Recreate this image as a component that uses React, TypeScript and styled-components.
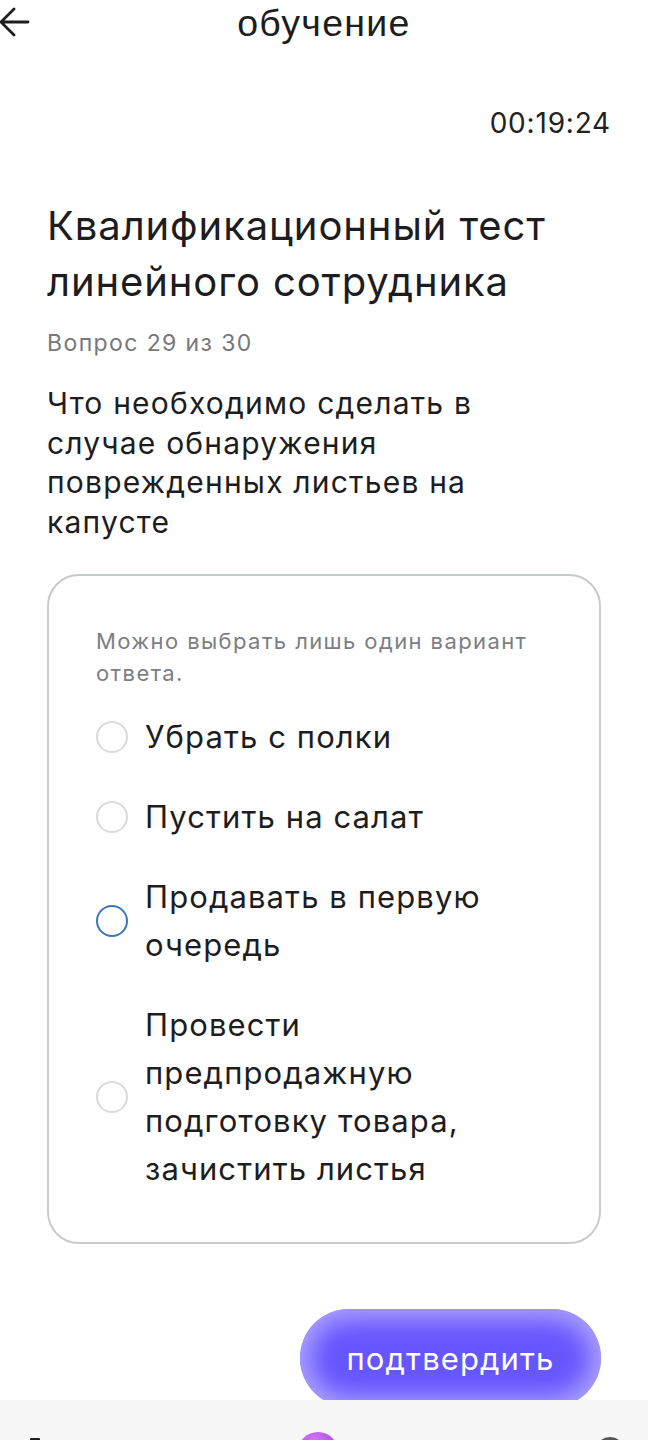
import styled, { createGlobalStyle } from 'styled-components'

const GlobalStyle = createGlobalStyle`
  html, body {
    margin: 0;
    padding: 0;
    background: #ffffff;
  }
  body {
    font-family: Inter, 'Noto Sans', sans-serif;
    color: #1d1d1f;
  }
  * {
    box-sizing: border-box;
  }
`

const Page = styled.div`
  width: 648px;
  height: 1440px;
  display: flex;
  flex-direction: column;
  overflow: hidden;
`

const Header = styled.header`
  position: relative;
  display: flex;
  align-items: center;
  justify-content: center;
  height: 46px;
`

const BackButton = styled.button`
  position: absolute;
  left: -3px;
  top: 5px;
  display: flex;
  padding: 0;
  border: none;
  background: none;
  color: #1d1d1f;
`

const HeaderTitle = styled.h1`
  margin: 0;
  font-family: 'Liberation Sans', Arial, sans-serif;
  font-size: 37.5px;
  font-weight: 400;
  letter-spacing: 1.3px;
  color: #1d1d1f;
`

const Content = styled.main`
  flex: 1;
  min-height: 0;
  display: flex;
  flex-direction: column;
  padding: 0 47px;
`

const Timer = styled.div`
  align-self: flex-end;
  margin-top: 60px;
  margin-right: -10px;
  font-size: 28px;
  letter-spacing: 0.8px;
  color: #222;
`

const Title = styled.h2`
  margin: 58px 0 0;
  font-size: 40px;
  line-height: 56px;
  font-weight: 400;
  letter-spacing: 0.9px;
  color: #1d1d1f;
`

const Counter = styled.div`
  margin-top: 18px;
  font-size: 23px;
  line-height: 30px;
  letter-spacing: 1.4px;
  color: #76787c;
`

const Question = styled.p`
  margin: 26px 0 0;
  padding-right: 50px;
  font-size: 30px;
  line-height: 39.5px;
  letter-spacing: 1.2px;
  color: #1d1d1f;
`

const Card = styled.section`
  margin-top: 32px;
  display: flex;
  flex-direction: column;
  gap: 24px;
  padding: 49px 40px 49px 47px;
  border: 2px solid #c7cace;
  border-radius: 32px;
`

const Hint = styled.div`
  font-size: 22px;
  line-height: 32px;
  letter-spacing: 1.4px;
  color: #7b7e84;
`

const Options = styled.div`
  display: flex;
  flex-direction: column;
  gap: 32px;
`

const Option = styled.label`
  display: flex;
  align-items: center;
  gap: 17px;
  cursor: pointer;
`

const Radio = styled.span<{ $active?: boolean }>`
  flex-shrink: 0;
  width: 32px;
  height: 32px;
  border-radius: 50%;
  border: 2px solid ${p => (p.$active ? '#3a76c2' : '#dadada')};
`

const OptionText = styled.span`
  font-size: 31px;
  line-height: 48px;
  letter-spacing: 1.1px;
  color: #1d1d1f;
`

const Actions = styled.div`
  display: flex;
  justify-content: flex-end;
  margin-top: 65px;
`

const ConfirmButton = styled.button`
  flex-shrink: 0;
  width: 301px;
  height: 98px;
  border: none;
  border-radius: 49px;
  background: #6656ff;
  box-shadow: inset 0 0 24px 10px rgba(186, 176, 255, 0.85);
  color: #ffffff;
  font-family: Inter, 'Noto Sans', sans-serif;
  font-size: 31px;
  letter-spacing: 1.1px;
`

const BottomNav = styled.nav`
  position: relative;
  z-index: 1;
  flex-shrink: 0;
  display: flex;
  justify-content: space-between;
  align-items: flex-start;
  height: 40px;
  padding: 32px 23px 0 30px;
  background: #f7f7f7;
`

const NavHome = styled.span`
  width: 10px;
  height: 10px;
  margin-top: 6px;
  background: #1d1d1f;
  border-radius: 1px 1px 0 0;
`

const NavOrb = styled.span`
  width: 40px;
  height: 40px;
  border-radius: 50%;
  background: radial-gradient(circle at 40% 30%, #d77cf7 0%, #b24cec 60%, #9a3ad6 100%);
`

const NavAvatar = styled.span`
  width: 30px;
  height: 30px;
  margin-top: 5px;
  border-radius: 50%;
  background: radial-gradient(circle at 50% 30%, #6a6a6a 0%, #3a3a3a 70%);
`

const options = [
  { text: 'Убрать с полки' },
  { text: 'Пустить на салат' },
  { text: 'Продавать в первую очередь', active: true },
  { text: 'Провести предпродажную подготовку товара, зачистить листья' },
]

const ArrowLeft = () => (
  <svg width="34" height="34" viewBox="0 0 34 34" fill="none">
    <path
      d="M31 17H4M17 4L4 17l13 13"
      stroke="currentColor"
      strokeWidth="2.8"
      strokeLinecap="round"
      strokeLinejoin="round"
    />
  </svg>
)

export default function App() {
  return (
    <Page>
      <GlobalStyle />
      <Header>
        <BackButton aria-label="назад">
          <ArrowLeft />
        </BackButton>
        <HeaderTitle>обучение</HeaderTitle>
      </Header>
      <Content>
        <Timer>00:19:24</Timer>
        <Title>
          Квалификационный тест
          <br />
          линейного сотрудника
        </Title>
        <Counter>Вопрос 29 из 30</Counter>
        <Question>
          Что необходимо сделать в случае обнаружения поврежденных листьев на
          капусте
        </Question>
        <Card>
          <Hint>Можно выбрать лишь один вариант ответа.</Hint>
          <Options>
            {options.map(o => (
              <Option key={o.text}>
                <Radio $active={o.active} />
                <OptionText>{o.text}</OptionText>
              </Option>
            ))}
          </Options>
        </Card>
        <Actions>
          <ConfirmButton>подтвердить</ConfirmButton>
        </Actions>
      </Content>
      <BottomNav>
        <NavHome />
        <NavOrb />
        <NavAvatar />
      </BottomNav>
    </Page>
  )
}
